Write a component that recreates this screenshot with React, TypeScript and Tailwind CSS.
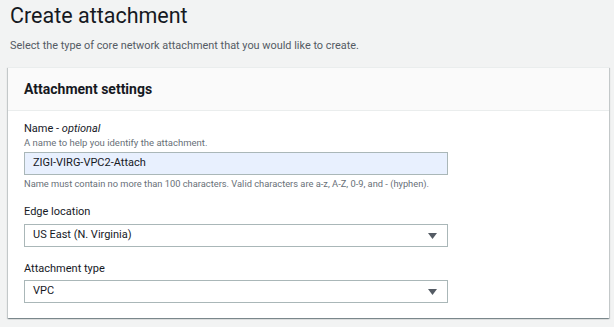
import React from 'react';

const font = { fontFamily: 'Roboto, "Noto Sans", sans-serif' };

const Caret: React.FC = () => (
  <svg width="9" height="6" viewBox="0 0 9 6" className="shrink-0">
    <path d="M0 0h9L4.5 6z" fill="#545b64" />
  </svg>
);

const SelectBox: React.FC<{ value: string }> = ({ value }) => (
  <div className="flex h-[23px] w-[424px] items-center justify-between border border-[#aab7b8] bg-white pl-[8px] pr-[10px]">
    <span className="text-[11px] text-[#16191f]">{value}</span>
    <Caret />
  </div>
);

const App: React.FC = () => {
  return (
    <div className="h-[327px] w-[614px] overflow-hidden bg-[#f2f3f3] px-[8px] pt-[2px]" style={font}>
      {/* Page header */}
      <h1 className="pl-[2px] text-[21.5px] leading-[28px] text-[#16191f]">Create attachment</h1>
      <p className="mt-[8px] pl-[2px] text-[10.9px] leading-[16px] text-[#545b64]">
        Select the type of core network attachment that you would like to create.
      </p>

      {/* Settings card */}
      <div className="mt-[13px] w-[601px] border-t border-[#eaeded] bg-white shadow-[0_1px_1px_rgba(0,28,36,0.3),1px_1px_1px_rgba(0,28,36,0.15),-1px_1px_1px_rgba(0,28,36,0.15)]">
        <div className="flex h-[43px] items-center border-b border-[#eaeded] bg-[#fafafa] px-[16px]">
          <h2 className="text-[14px] font-bold text-[#16191f]">Attachment settings</h2>
        </div>

        <div className="px-[16px] pb-[15px] pt-[10px]">
          <div>
            <div className="text-[11px] leading-[15px] text-[#16191f]">
              Name - <i className="text-[#16191f]">optional</i>
            </div>
            <div className="text-[9.5px] leading-[13px] text-[#687078]">A name to help you identify the attachment.</div>
            <div className="mt-[3px] flex h-[23px] w-[424px] items-center border border-[#aab7b8] bg-[#e8f0fe] px-[8px]">
              <span className="text-[11px] text-[#16191f]">ZIGI-VIRG-VPC2-Attach</span>
            </div>
            <div className="mt-[2px] text-[9.3px] leading-[13px] text-[#687078]">
              Name must contain no more than 100 characters. Valid characters are a-z, A-Z, 0-9, and - (hyphen).
            </div>
          </div>

          <div className="mt-[14px]">
            <div className="mb-[4px] text-[11px] leading-[16px] text-[#16191f]">Edge location</div>
            <SelectBox value="US East (N. Virginia)" />
          </div>

          <div className="mt-[14px]">
            <div className="mb-[3px] text-[11px] leading-[16px] text-[#16191f]">Attachment type</div>
            <SelectBox value="VPC" />
          </div>
        </div>
      </div>
    </div>
  );
};

export default App;
